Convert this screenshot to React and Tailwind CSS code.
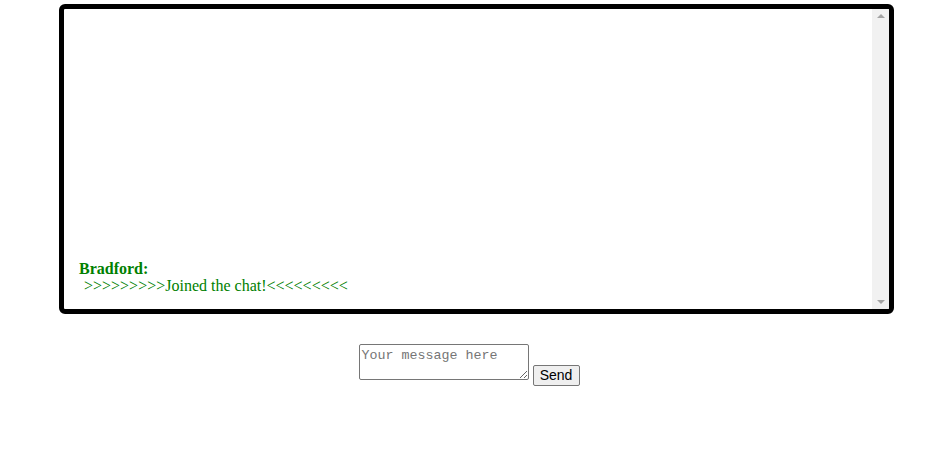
import React from 'react';

export default function App() {
  const messages = [
    { user: 'Bradford', text: '>>>>>>>>>Joined the chat!<<<<<<<<<' },
  ];

  return (
    <div className="w-[937px] h-[463px] bg-white pt-[4px]">
      {/* Chat log box */}
      <div className="ml-[59px] w-[835px] h-[310px] border-[5px] border-black rounded-[6px] flex overflow-hidden">
        <div className="flex-1 flex flex-col justify-end pl-[15px] pb-[15px] font-['Liberation_Serif',serif] text-[16px] leading-[17px] text-[#008000]">
          {messages.map((m, i) => (
            <div key={i}>
              <div className="font-bold">{m.user}:</div>
              <div className="whitespace-pre pl-[1px]"> {m.text}</div>
            </div>
          ))}
        </div>
        {/* Scrollbar */}
        <div className="w-[17px] bg-[#f1f1f1] flex flex-col justify-between items-center py-[5px]">
          <div className="w-0 h-0 border-l-[4px] border-r-[4px] border-b-[4px] border-l-transparent border-r-transparent border-b-[#a3a3a3]" />
          <div className="w-0 h-0 border-l-[4px] border-r-[4px] border-t-[4px] border-l-transparent border-r-transparent border-t-[#a3a3a3]" />
        </div>
      </div>

      {/* Message input */}
      <div className="flex justify-center items-start gap-[4px] mt-[30px] ml-[1px]">
        <textarea
          placeholder="Your message here"
          className="w-[170px] h-[36px] border border-[#767676] rounded-[2px] px-[2px] pt-[3px] pb-0 font-['Liberation_Mono',monospace] text-[13.33px] leading-[15px] placeholder:text-[#757575] text-black"
        />
        <button className="mt-[21px] h-[21px] w-[47px] bg-[#efefef] border border-[#767676] rounded-[2px] font-['Liberation_Sans',Arial,sans-serif] text-[14px] leading-[15px] text-black">
          Send
        </button>
      </div>
    </div>
  );
}
